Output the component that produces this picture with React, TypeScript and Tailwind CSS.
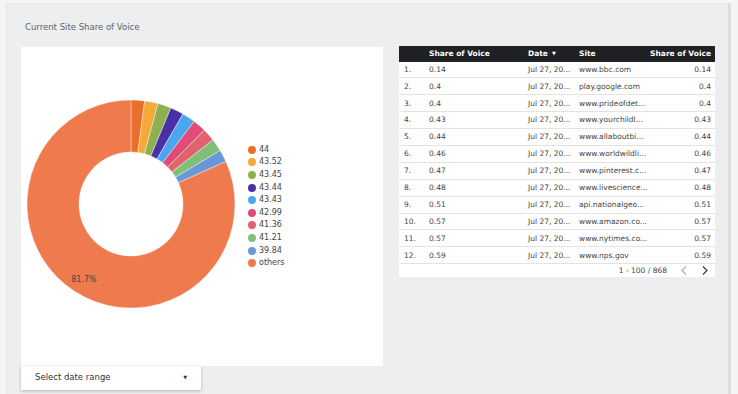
import React from 'react';

const slices = [
  { label: '44', value: 44, color: '#e8702a' },
  { label: '43.52', value: 43.52, color: '#f4a93a' },
  { label: '43.45', value: 43.45, color: '#8cb14e' },
  { label: '43.44', value: 43.44, color: '#4a30a6' },
  { label: '43.43', value: 43.43, color: '#4aa6ef' },
  { label: '42.99', value: 42.99, color: '#e14b78' },
  { label: '41.36', value: 41.36, color: '#e0626b' },
  { label: '41.21', value: 41.21, color: '#7fbf78' },
  { label: '39.84', value: 39.84, color: '#6a98d6' },
];

const top9 = slices.reduce((s, x) => s + x.value, 0);
const total = top9 / 0.183;
const allSlices = [...slices, { label: 'others', value: total - top9, color: '#ef7a4e' }];

const rows = [
  ['0.14', 'www.bbc.com'],
  ['0.4', 'play.google.com'],
  ['0.4', 'www.prideofdet...'],
  ['0.43', 'www.yourchildl...'],
  ['0.44', 'www.allaboutbi...'],
  ['0.46', 'www.worldwildli...'],
  ['0.47', 'www.pinterest.c...'],
  ['0.48', 'www.livescience...'],
  ['0.51', 'api.nationalgeo...'],
  ['0.57', 'www.amazon.co...'],
  ['0.57', 'www.nytimes.co...'],
  ['0.59', 'www.nps.gov'],
];

const font = { fontFamily: '"DejaVu Sans", "Noto Sans", sans-serif' };

function arc(cx: number, cy: number, r: number, ri: number, a0: number, a1: number) {
  const p = (rad: number, a: number) => [cx + rad * Math.sin(a), cy - rad * Math.cos(a)];
  const large = a1 - a0 > Math.PI ? 1 : 0;
  const [x0, y0] = p(r, a0);
  const [x1, y1] = p(r, a1);
  const [x2, y2] = p(ri, a1);
  const [x3, y3] = p(ri, a0);
  return `M${x0} ${y0} A${r} ${r} 0 ${large} 1 ${x1} ${y1} L${x2} ${y2} A${ri} ${ri} 0 ${large} 0 ${x3} ${y3} Z`;
}

const Donut = () => {
  let acc = 0;
  return (
    <svg width="226" height="319" className="shrink-0">
      {allSlices.map((s, i) => {
        const a0 = (acc / total) * Math.PI * 2;
        acc += s.value;
        const a1 = (acc / total) * Math.PI * 2;
        return <path key={i} d={arc(110, 157, 104, 52, a0, a1)} fill={s.color} stroke="#fff" strokeWidth="0.4" />;
      })}
      <text x="63" y="235" textAnchor="middle" fontSize="8" fill="#444" style={font}>81.7%</text>
    </svg>
  );
};

const Chevron = ({ dir, color }: { dir: 'l' | 'r'; color: string }) => (
  <svg width="6" height="9" viewBox="0 0 6 9">
    <path d={dir === 'l' ? 'M5 0.5 L1 4.5 L5 8.5' : 'M1 0.5 L5 4.5 L1 8.5'} fill="none" stroke={color} strokeWidth="1.1" />
  </svg>
);

const App = () => {
  return (
    <div className="w-[738px] h-[394px] overflow-hidden bg-[#f3f4f5] pl-[6px] pt-[3px]" style={font}>
      <div className="w-[725px] h-[400px] bg-[#eceef0] border-l border-t border-r-[3px] border-l-[#e3e5e7] border-t-[#e3e5e7] border-r-[#dcdee0] pl-[14px] pt-[19px]">
        <div className="text-[8.5px] text-[#5f6368] leading-none mb-[14px] ml-[4px]">Current Site Share of Voice</div>
        <div className="flex items-start">
          <div className="flex flex-col">
            <div className="w-[362px] h-[319px] bg-white flex mt-[1px]">
              <Donut />
              <div className="flex flex-col mt-[97px] ml-[1px]">
                {allSlices.map((s) => (
                  <div key={s.label} className="flex items-center h-[12.6px] gap-[3px]">
                    <span className="w-[8px] h-[8px] rounded-full" style={{ backgroundColor: s.color }} />
                    <span className="text-[8px] text-[#444]">{s.label}</span>
                  </div>
                ))}
              </div>
            </div>
            <div className="w-[180px] h-[24px] bg-white shadow-[0_1px_3px_rgba(0,0,0,0.25)] flex items-center justify-between pl-[14px] pr-[14px]">
              <span className="text-[8.5px] text-[#333]">Select date range</span>
              <span className="text-[5px] text-[#333]">▼</span>
            </div>
          </div>
          <div className="ml-[16px] w-[316px] bg-white text-[7.5px]">
            <div className="flex items-center h-[16px] bg-[#202124] text-white font-bold">
              <div className="w-[26px]" />
              <div className="w-[99px] pl-[4px]">Share of Voice</div>
              <div className="w-[51px] pl-[4px] flex items-center gap-[4px]">Date <span className="text-[5px]">▼</span></div>
              <div className="flex-1 pl-[4px]">Site</div>
              <div className="pr-[4px]">Share of Voice</div>
            </div>
            {rows.map((r, i) => (
              <div key={i} className="flex items-center h-[16.9px] border-b border-[#e3e3e3] text-[#444]">
                <div className="w-[26px] pl-[5px]">{i + 1}.</div>
                <div className="w-[99px] pl-[4px]">{r[0]}</div>
                <div className="w-[51px] pl-[4px]">Jul 27, 20...</div>
                <div className="flex-1 pl-[4px]">{r[1]}</div>
                <div className="pr-[4px]">{r[0]}</div>
              </div>
            ))}
            <div className="flex items-center justify-end h-[13px] text-[#444] pr-[7px]">
              <span>1 - 100 / 868</span>
              <span className="ml-[14px] flex"><Chevron dir="l" color="#aaa" /></span>
              <span className="ml-[15px] flex"><Chevron dir="r" color="#333" /></span>
            </div>
          </div>
        </div>
      </div>
    </div>
  );
};

export default App;
